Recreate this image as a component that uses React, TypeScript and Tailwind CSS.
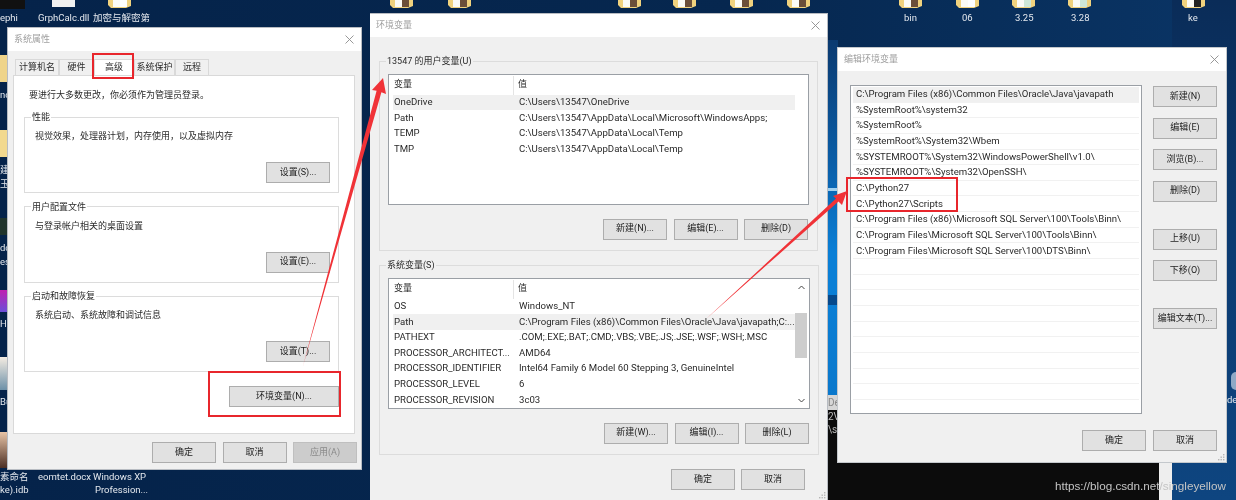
import type { ReactNode } from "react";

const UI_FONT = "font-['Roboto','Noto_Sans_CJK_SC',sans-serif]";

const userVars = [
  ["OneDrive", "C:\\Users\\13547\\OneDrive"],
  ["Path", "C:\\Users\\13547\\AppData\\Local\\Microsoft\\WindowsApps;"],
  ["TEMP", "C:\\Users\\13547\\AppData\\Local\\Temp"],
  ["TMP", "C:\\Users\\13547\\AppData\\Local\\Temp"],
];

const systemVars = [
  ["OS", "Windows_NT"],
  ["Path", "C:\\Program Files (x86)\\Common Files\\Oracle\\Java\\javapath;C:..."],
  ["PATHEXT", ".COM;.EXE;.BAT;.CMD;.VBS;.VBE;.JS;.JSE;.WSF;.WSH;.MSC"],
  ["PROCESSOR_ARCHITECT...", "AMD64"],
  ["PROCESSOR_IDENTIFIER", "Intel64 Family 6 Model 60 Stepping 3, GenuineIntel"],
  ["PROCESSOR_LEVEL", "6"],
  ["PROCESSOR_REVISION", "3c03"],
];

const pathEntries = [
  "C:\\Program Files (x86)\\Common Files\\Oracle\\Java\\javapath",
  "%SystemRoot%\\system32",
  "%SystemRoot%",
  "%SystemRoot%\\System32\\Wbem",
  "%SYSTEMROOT%\\System32\\WindowsPowerShell\\v1.0\\",
  "%SYSTEMROOT%\\System32\\OpenSSH\\",
  "C:\\Python27",
  "C:\\Python27\\Scripts",
  "C:\\Program Files (x86)\\Microsoft SQL Server\\100\\Tools\\Binn\\",
  "C:\\Program Files\\Microsoft SQL Server\\100\\Tools\\Binn\\",
  "C:\\Program Files\\Microsoft SQL Server\\100\\DTS\\Binn\\",
  "", "", "", "", "", "", "", "", "", "",
];

function Btn({ children, w = "w-[64px]", h = "h-[21px]", disabled = false }: { children: ReactNode; w?: string; h?: string; disabled?: boolean }) {
  return (
    <div
      className={`${w} ${h} shrink-0 flex items-center justify-center border text-[9px] whitespace-nowrap ${
        disabled ? "bg-[#cccccc] border-[#bfbfbf] text-[#8a8a8a]" : "bg-[#e1e1e1] border-[#adadad] text-[#222]"
      }`}
    >
      {children}
    </div>
  );
}

function TitleBar({ title }: { title: string }) {
  return (
    <div className="h-[23px] bg-white flex items-center justify-between pl-[6px] pr-[7px] shrink-0">
      <span className="text-[9px] text-[#a0a0a0]">{title}</span>
      <svg width="9" height="9" viewBox="0 0 9 9" stroke="#8c8c8c" strokeWidth="0.9">
        <path d="M0.5 0.5L8.5 8.5M8.5 0.5L0.5 8.5" />
      </svg>
    </div>
  );
}

function Group({ label, desc, btn }: { label: string; desc: string; btn: string }) {
  return (
    <fieldset className="h-[82px] border border-[#dcdcdc] flex flex-col">
      <legend className="ml-[6px] px-[1px] text-[9px] leading-[12px] text-[#2a2a2a]">{label}</legend>
      <div className="mt-[6px] ml-[10px] text-[9px] leading-[14px] text-[#2a2a2a]">{desc}</div>
      <div className="mt-[19px] pr-[8px] flex justify-end">
        <Btn>{btn}</Btn>
      </div>
    </fieldset>
  );
}

function VarList({ rows, scroll = false, hot }: { rows: string[][]; scroll?: boolean; hot: number }) {
  return (
    <div className="h-[131px] border border-[#9a9fa5] bg-white pl-[4px] pr-[1px] pt-[1px] flex">
      <div className="w-[402px] shrink-0">
        <div className="h-[19px] flex items-center text-[9px] text-[#2a2a2a]">
          <div className="w-[121px] pl-[1px] border-r border-[#e4e4e4] h-full flex items-center">变量</div>
          <div className="pl-[4px]">值</div>
        </div>
        {rows.map(([name, value], i) => (
          <div key={i} className={`h-[15.6px] flex items-center text-[9.6px] text-[#2a2a2a] whitespace-nowrap ${i === hot ? "bg-[#f0f0f0]" : ""}`}>
            <div className="w-[126px] pl-[1px] shrink-0">{name}</div>
            <div>{value}</div>
          </div>
        ))}
      </div>
      {scroll && (
        <div className="ml-auto w-[13px] flex flex-col items-center justify-between text-[#555] relative">
          <svg width="7" height="5" viewBox="0 0 7 5" className="mt-[5px]" fill="none" stroke="#444" strokeWidth="1">
            <path d="M0.5 4L3.5 1L6.5 4" />
          </svg>
          <div className="absolute top-[33px] left-0 w-[12px] h-[45px] bg-[#cdcdcd]" />
          <svg width="7" height="5" viewBox="0 0 7 5" className="mb-[5px]" fill="none" stroke="#444" strokeWidth="1">
            <path d="M0.5 1L3.5 4L6.5 1" />
          </svg>
        </div>
      )}
    </div>
  );
}

function VarGroup({ label, rows, scroll, hot, buttons }: { label: string; rows: string[][]; scroll?: boolean; hot: number; buttons: string[] }) {
  return (
    <fieldset className="h-[196px] border border-[#dcdcdc] mx-[9px]">
      <legend className="ml-[6px] px-[1px] text-[9px] leading-[12px] text-[#2a2a2a]">{label}</legend>
      <div className="mt-[6.5px] mx-[8px]">
        <VarList rows={rows} scroll={scroll} hot={hot} />
      </div>
      <div className="mt-[14px] flex justify-end gap-[6.5px] pr-[9px]">
        {buttons.map((b) => (
          <Btn key={b}>{b}</Btn>
        ))}
      </div>
    </fieldset>
  );
}

function SystemWindow() {
  const tabs = ["计算机名", "硬件", "高级", "系统保护", "远程"];
  const tabWidths = ["w-[44px]", "w-[35px]", "w-[40px]", "w-[41px]", "w-[34px]"];
  return (
    <div className="absolute left-[7px] top-[27px] w-[355px] h-[443px] bg-[#f0f0f0] border border-[#b8bcc2] flex flex-col">
      <TitleBar title="系统属性" />
      <div className="flex pl-[7px] mt-[8px] h-[16px] items-end">
        {tabs.map((t, i) => (
          <div
            key={t}
            className={`${tabWidths[i]} h-[16px] border border-b-0 border-[#d9d9d9] flex items-center justify-center text-[9px] text-[#2a2a2a] whitespace-nowrap ${i === 2 ? "bg-white" : "bg-[#f0f0f0]"}`}
          >
            {t}
          </div>
        ))}
      </div>
      <div className="mx-[5px] w-[342px] h-[359px] bg-white border border-[#d9d9d9] pl-[10px] pr-[15px] flex flex-col">
        <div className="mt-[12px] ml-[5px] text-[9px] leading-[14px] text-[#2a2a2a]">要进行大多数更改，你必须作为管理员登录。</div>
        <div className="mt-[9px] flex flex-col gap-[7.5px]">
          <Group label="性能" desc="视觉效果，处理器计划，内存使用，以及虚拟内存" btn="设置(S)..." />
          <Group label="用户配置文件" desc="与登录帐户相关的桌面设置" btn="设置(E)..." />
          <Group label="启动和故障恢复" desc="系统启动、系统故障和调试信息" btn="设置(T)..." />
        </div>
        <div className="mt-[14px] flex justify-end">
          <Btn w="w-[110px]">环境变量(N)...</Btn>
        </div>
      </div>
      <div className="mt-[8px] flex justify-end gap-[6.5px] pr-[4px]">
        <Btn>确定</Btn>
        <Btn>取消</Btn>
        <Btn disabled>应用(A)</Btn>
      </div>
    </div>
  );
}

function EnvWindow() {
  return (
    <div className="absolute left-[370px] top-[13px] w-[458px] h-[487px] bg-[#f0f0f0] border-r border-t border-[#b8bcc2] flex flex-col">
      <TitleBar title="环境变量" />
      <div className="mt-[18px]">
        <VarGroup label="13547 的用户变量(U)" rows={userVars} hot={0} buttons={["新建(N)...", "编辑(E)...", "删除(D)"]} />
      </div>
      <div className="mt-[8px]">
        <VarGroup label="系统变量(S)" rows={systemVars} hot={1} scroll buttons={["新建(W)...", "编辑(I)...", "删除(L)"]} />
      </div>
      <div className="mt-[14px] flex justify-end gap-[6px] pr-[22px]">
        <Btn>确定</Btn>
        <Btn>取消</Btn>
      </div>
      <svg className="absolute right-[1px] bottom-[1px]" width="7" height="7" viewBox="0 0 7 7" fill="#b5b5b5">
        <rect x="5" y="0" width="1.4" height="1.4" />
        <rect x="2.5" y="2.5" width="1.4" height="1.4" />
        <rect x="5" y="2.5" width="1.4" height="1.4" />
        <rect x="0" y="5" width="1.4" height="1.4" />
        <rect x="2.5" y="5" width="1.4" height="1.4" />
        <rect x="5" y="5" width="1.4" height="1.4" />
      </svg>
    </div>
  );
}

function EditWindow() {
  return (
    <div className="absolute left-[837px] top-[47px] w-[390px] h-[416px] bg-[#f0f0f0] border border-[#c4c8cc] flex flex-col">
      <TitleBar title="编辑环境变量" />
      <div className="flex pl-[12px] pr-[9px] mt-[14px] justify-between">
        <div className="w-[292px] h-[329px] border border-[#9a9fa5] bg-white px-[2px] pt-[1px] overflow-hidden">
          {pathEntries.map((p, i) => (
            <div key={i} className={`h-[15.65px] pl-[3px] flex items-center border-b border-[#f1f1f1] text-[9.6px] text-[#2a2a2a] whitespace-nowrap ${i === 0 ? "bg-[#f0f0f0]" : ""}`}>
              {p}
            </div>
          ))}
        </div>
        <div className="flex flex-col mt-[1px]">
          <div className="flex flex-col gap-[10.5px]">
            <Btn>新建(N)</Btn>
            <Btn>编辑(E)</Btn>
            <Btn>浏览(B)...</Btn>
            <Btn>删除(D)</Btn>
          </div>
          <div className="mt-[27px] flex flex-col gap-[10.5px]">
            <Btn>上移(U)</Btn>
            <Btn>下移(O)</Btn>
          </div>
          <div className="mt-[27px]">
            <Btn>编辑文本(T)...</Btn>
          </div>
        </div>
      </div>
      <div className="mt-[16px] flex justify-end gap-[7px] pr-[9px]">
        <Btn>确定</Btn>
        <Btn>取消</Btn>
      </div>
      <svg className="absolute right-[1px] bottom-[1px]" width="7" height="7" viewBox="0 0 7 7" fill="#b5b5b5">
        <rect x="5" y="0" width="1.4" height="1.4" />
        <rect x="2.5" y="2.5" width="1.4" height="1.4" />
        <rect x="5" y="2.5" width="1.4" height="1.4" />
        <rect x="0" y="5" width="1.4" height="1.4" />
        <rect x="2.5" y="5" width="1.4" height="1.4" />
        <rect x="5" y="5" width="1.4" height="1.4" />
      </svg>
    </div>
  );
}

// desktop icons cut off by the top edge of the picture
const topFolders = [
  { x: 108, c: "#f0d27e", d: "#ffffff" },
  { x: 390, c: "#f0d27e", d: "#6b4f3a" },
  { x: 448, c: "#f0d27e", d: "#6b4f3a" },
  { x: 618, c: "#f0d27e", d: "#6b4f3a" },
  { x: 673, c: "#f0d27e", d: "#6b4f3a" },
  { x: 730, c: "#f0d27e", d: "#6b4f3a" },
  { x: 787, c: "#f0d27e", d: "#6b4f3a" },
  { x: 899, c: "#f0d27e", d: "#6b4f3a" },
  { x: 956, c: "#f0d27e", d: "#ffffff" },
  { x: 1012, c: "#f0d27e", d: "#cfe8d8" },
  { x: 1068, c: "#f0d27e", d: "#cfe8d8" },
  { x: 1182, c: "#f0d27e", d: "#222222" },
];

const deskLabels = [
  { x: 0, y: 11, t: "ephi" },
  { x: 38, y: 11, t: "GrphCalc.dll" },
  { x: 93, y: 11, t: "加密与解密第" },
  { x: 904, y: 11, t: "bin" },
  { x: 962, y: 11, t: "06" },
  { x: 1015, y: 11, t: "3.25" },
  { x: 1071, y: 11, t: "3.28" },
  { x: 1188, y: 11, t: "ke" },
  { x: 0, y: 88, t: "nd" },
  { x: 0, y: 163, t: "建" },
  { x: 0, y: 177, t: "玉" },
  { x: 0, y: 241, t: "dc" },
  { x: 0, y: 255, t: "es" },
  { x: 0, y: 317, t: "He" },
  { x: 0, y: 395, t: "Bu" },
  { x: 0, y: 470, t: "素命名" },
  { x: 0, y: 483, t: "ke).idb" },
  { x: 38, y: 470, t: "eomtet.docx" },
  { x: 93, y: 470, t: "Windows XP" },
  { x: 95, y: 483, t: "Profession..." },
  { x: 1227, y: 393, t: "de" },
];

function Desktop() {
  return (
    <>
      {/* wallpaper gets lighter towards the lower right */}
      <div className="absolute left-[1172px] top-0 w-[64px] h-[500px] bg-[linear-gradient(180deg,#0a2c58_0%,#0b3b72_50%,#0e4580_100%)]" />
      {/* windows left open behind the dialogs */}
      <div className="absolute left-[828px] top-[40px] w-[10px] h-[355px] bg-[linear-gradient(180deg,#0b3a70_0%,#0a5ea8_35%,#0a7fd6_60%,#0a7fd6_70%,#0a78cc_100%)]" />
      <div className="absolute left-[828px] top-[188px] w-[10px] h-[3px] bg-[#9fd0f0]" />
      <div className="absolute left-[828px] top-[295px] w-[10px] h-[10px] bg-[#05498c]" />
      <div className="absolute left-[828px] top-[395px] w-[10px] h-[15px] bg-[#d6d6d6] text-[10px] text-[#888] overflow-hidden">De</div>
      <div className="absolute left-[828px] top-[410px] w-[331px] h-[90px] bg-[#0c0c0c] text-[10px] leading-[13px] text-[#bbb] overflow-hidden">
        2V
        <br />
        \s
      </div>
      <div className="absolute left-[1159px] top-[463px] w-[13px] h-[37px] bg-[#eeeeee]" />
      <div className="absolute left-[1231px] top-[372px] w-[5px] h-[18px] rounded-l-full bg-[#8fa9c6]" />

      {topFolders.map((f) => (
        <svg key={f.x} className="absolute top-0" style={{ left: f.x }} width="23" height="8" viewBox="0 0 23 8">
          <path d="M0 0H23V6L18 8H3L0 5Z" fill={f.c} />
          <rect x="5" y="0" width="14" height="7" fill="#fbfbf6" />
          <rect x="12" y="0" width="7" height="7" fill={f.d} />
        </svg>
      ))}
      <div className="absolute left-0 top-0 w-[25px] h-[9px] bg-[#111]" />
      <div className="absolute left-[52px] top-0 w-[23px] h-[7px] bg-[#f0f0f0]" />

      <div className="absolute left-0 top-[55px] w-[7px] h-[27px] bg-[#efd48a]" />
      <div className="absolute left-0 top-[130px] w-[7px] h-[27px] bg-[#f2d98f]" />
      <div className="absolute left-0 top-[218px] w-[7px] h-[17px] bg-[#20342c]" />
      <div className="absolute left-0 top-[290px] w-[7px] h-[22px] bg-[linear-gradient(180deg,#c01fb0,#6a4fd8)]" />
      <div className="absolute left-0 top-[357px] w-[7px] h-[33px] bg-[linear-gradient(180deg,#f4ece2,#6c90a8)]" />
      <div className="absolute left-0 top-[432px] w-[7px] h-[36px] bg-[linear-gradient(180deg,#e8c4a6,#4c2f24)]" />

      {deskLabels.map((l) => (
        <div key={l.t + l.x} className="absolute text-[9.5px] leading-[13px] text-[#e4e8ee] whitespace-nowrap" style={{ left: l.x, top: l.y }}>
          {l.t}
        </div>
      ))}
    </>
  );
}

function Annotations() {
  return (
    <>
      <div className="absolute left-[92px] top-[53px] w-[42px] h-[26px] border-2 border-[#e8262c]" />
      <div className="absolute left-[208px] top-[371px] w-[133px] h-[46px] border-2 border-[#e8262c]" />
      <div className="absolute left-[846px] top-[177px] w-[112px] h-[35px] border-2 border-[#e8262c]" />
      <svg className="absolute left-0 top-0" width="1236" height="500" viewBox="0 0 1236 500" fill="#f03237">
        <polygon points="383,78 386,94 381.4,92.2 303,366 376.6,90.8 372,90" />
        <polygon points="847,191 842,205 838.5,201.5 706,319 836,198.5 833,196" />
      </svg>
    </>
  );
}

export default function App() {
  return (
    <div className={`relative w-[1236px] h-[500px] overflow-hidden blur-[0.35px] ${UI_FONT} bg-[linear-gradient(90deg,#05234a_0%,#06274f_60%,#0a3566_100%)]`}>
      <Desktop />
      <SystemWindow />
      <EditWindow />
      <EnvWindow />
      <Annotations />
      <div className="absolute left-[1055px] top-[477px] text-[11.7px] leading-[18px] text-[#c4c4c4] whitespace-nowrap font-['Liberation_Sans',sans-serif]">
        https://blog.csdn.net/singleyellow
      </div>
    </div>
  );
}
